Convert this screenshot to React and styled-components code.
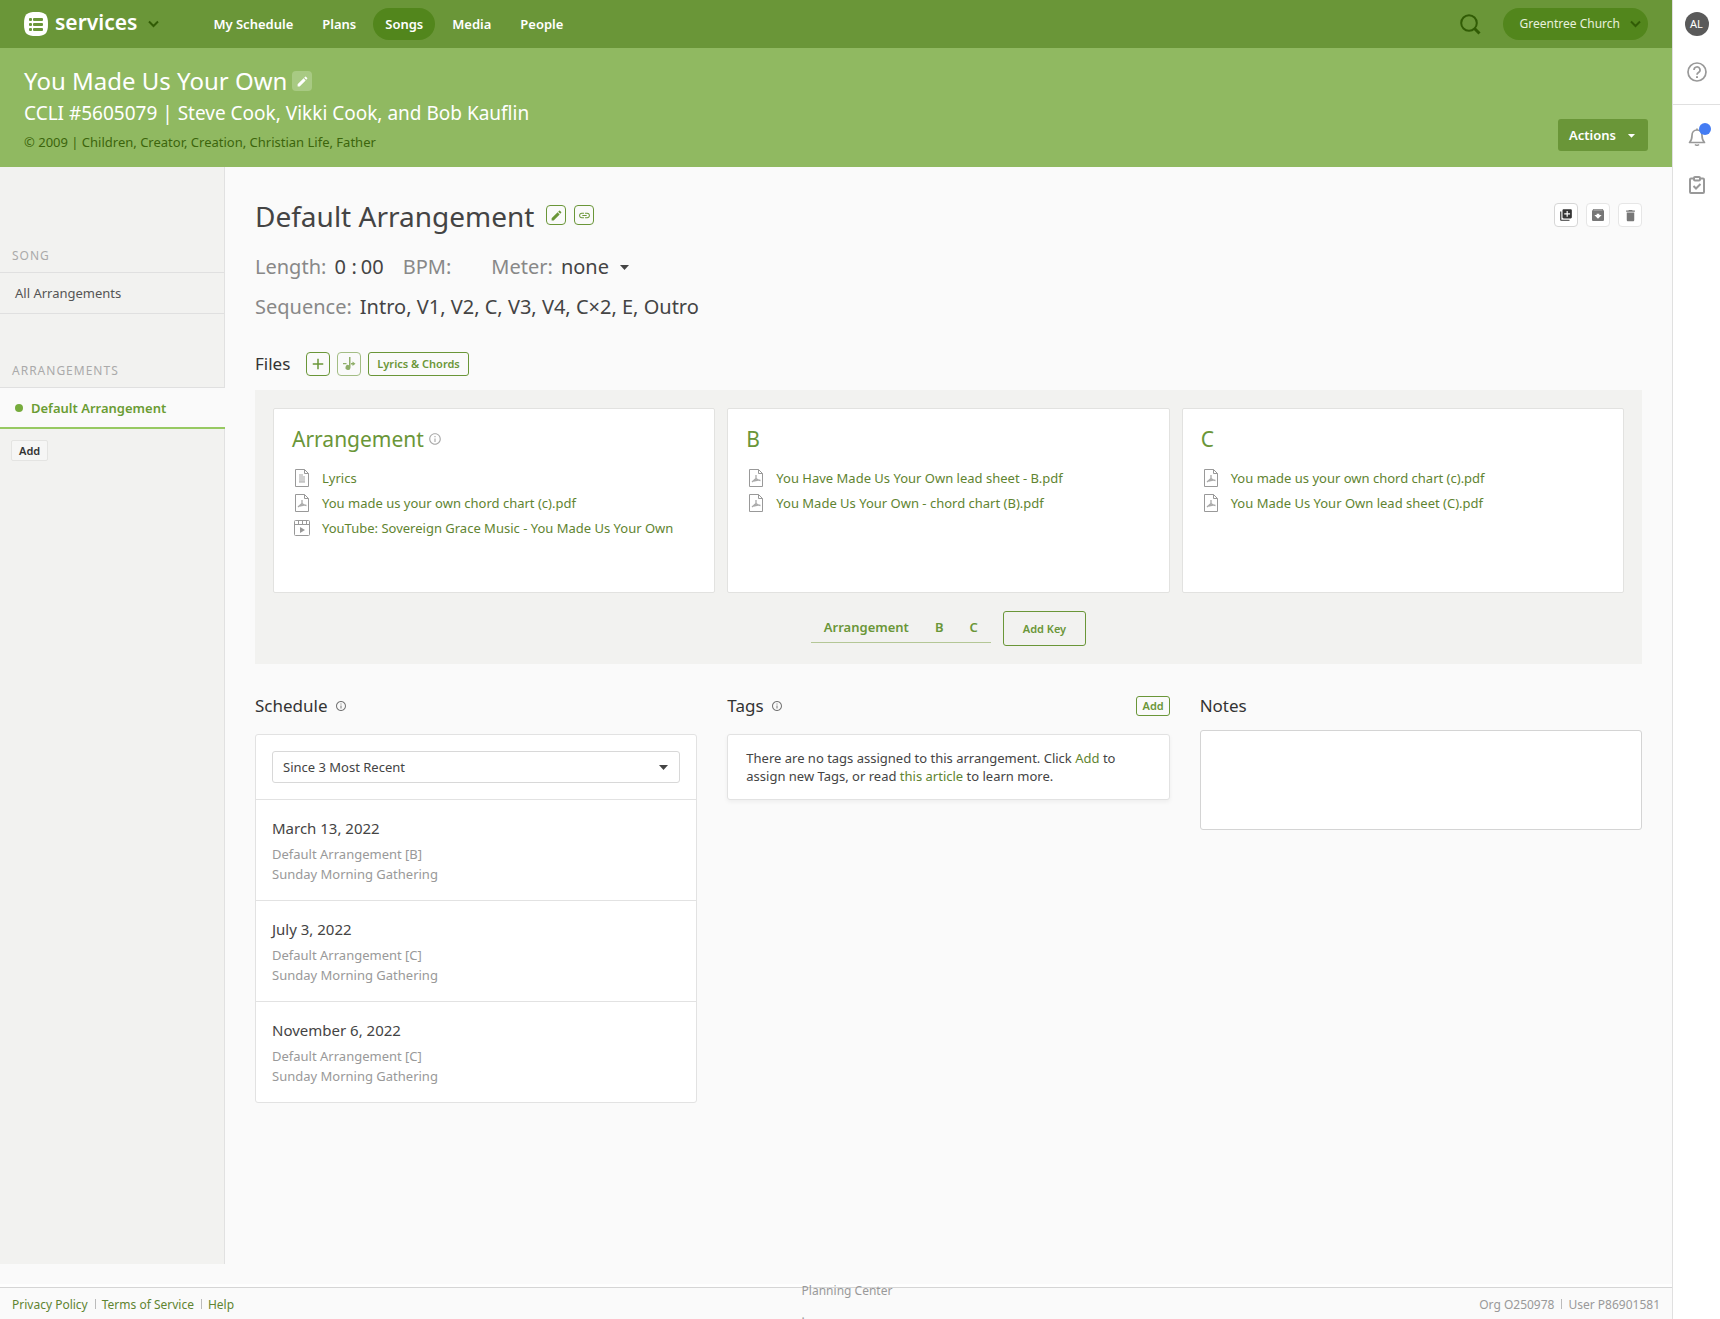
import React, { useState } from 'react';
import styled, { createGlobalStyle } from 'styled-components';
import {
  MdAdd,
  MdArchive,
  MdArrowDropDown,
  MdDelete,
  MdEdit,
  MdLibraryAdd,
  MdLink,
  MdOutlineInfo,
} from 'react-icons/md';

const GlobalStyle = createGlobalStyle`
  *, *::before, *::after {
    box-sizing: border-box;
  }

  body {
    margin: 0;
    background: #fafafa;
    color: #444;
    font-family: 'Noto Sans', sans-serif;
    font-size: 13px;
    line-height: 20px;
  }

  h1, h2, h3, p, ul {
    margin: 0;
    padding: 0;
    font-weight: 400;
  }

  ul {
    list-style: none;
  }

  button, input, select, textarea {
    font: inherit;
    color: inherit;
  }

  button {
    cursor: pointer;
  }

  a {
    color: #5f8431;
    text-decoration: none;
  }

  svg {
    display: block;
    flex: none;
  }
`;

const Shell = styled.div`
  display: flex;
  min-height: 100vh;
  overflow: hidden;
`;

const Page = styled.div`
  flex: 1;
  min-width: 0;
  display: flex;
  flex-direction: column;
`;

/* Top bar */
const TopBar = styled.header`
  display: flex;
  align-items: center;
  height: 48px;
  padding: 0 24px;
  background: #6a9638;
  color: #fff;
`;

const Brand = styled.button`
  display: flex;
  align-items: center;
  gap: 7px;
  padding: 0;
  border: 0;
  background: none;
  margin-right: 42px;
`;

const BrandName = styled.span`
  font-size: 21px;
  font-weight: 600;
  line-height: 24px;
  padding-bottom: 4px;
  margin-right: 4px;
`;

const Nav = styled.nav`
  display: flex;
  gap: 5px;
  flex: 1;
`;

const NavLink = styled.a`
  padding: 6px 12px;
  border-radius: 16px;
  background: ${(p) => (p.$active ? '#52861c' : 'transparent')};
  color: #fff;
  font-weight: 600;
`;

const SearchButton = styled.button`
  padding: 0;
  border: 0;
  background: none;
  margin-right: 22px;
`;

const OrgButton = styled.button`
  display: flex;
  align-items: center;
  gap: 10px;
  height: 32px;
  padding: 0 7px 0 17px;
  border: 0;
  border-radius: 16px;
  background: #52861c;
  color: #e8f1dc;
  font-size: 12px;
`;

/* Song header */
const SongHeader = styled.section`
  display: flex;
  justify-content: space-between;
  align-items: flex-end;
  padding: 17px 24px 12px;
  background: #90b961;
  color: #fff;
`;

const SongTitle = styled.h1`
  display: flex;
  align-items: center;
  gap: 5px;
  font-size: 24px;
  line-height: 32px;
`;

const SongAuthors = styled.p`
  font-size: 19px;
  line-height: 32px;
`;

const SongMeta = styled.p`
  line-height: 26px;
  color: #3c650c;
`;

const ActionsButton = styled.button`
  display: flex;
  align-items: center;
  gap: 7px;
  height: 32px;
  margin-bottom: 4px;
  padding: 0 8px 0 11px;
  border: 0;
  border-radius: 3px;
  background: #6a9638;
  color: #fff;
  font-weight: 600;
`;

const SquareButton = styled.button`
  display: flex;
  align-items: center;
  justify-content: center;
  width: ${(p) => p.$size || 20}px;
  height: ${(p) => p.$size || 20}px;
  padding: 0;
  border: 1px solid ${(p) => p.$border || '#6a9638'};
  border-radius: 4px;
  background: ${(p) => p.$bg || 'transparent'};
  color: ${(p) => p.$color || '#6a9638'};
`;

/* Body */
const Body = styled.div`
  display: flex;
  flex: 1;
  margin-bottom: 23px;
`;

const Sidebar = styled.aside`
  width: 225px;
  flex: none;
  padding-top: 32px;
  border-right: 1px solid #e1e1e1;
  background: #f2f2f0;
`;

const SidebarLabel = styled.h2`
  margin-top: 40px;
  padding: 0 12px;
  font-size: 12px;
  line-height: 33px;
  letter-spacing: 1px;
  color: #aaa;
`;

const SidebarLink = styled.a`
  display: flex;
  align-items: center;
  height: 42px;
  padding: 0 15px;
  border-top: 1px solid #e0e0e0;
  border-bottom: 1px solid #e0e0e0;
  color: #555;
`;

const ActiveLink = styled(SidebarLink)`
  gap: 8px;
  margin-right: -1px;
  border-bottom: 2px solid #97c962;
  background: #fafafa;
  color: #6a9c33;
  font-weight: 600;

  &::before {
    content: '';
    width: 8px;
    height: 8px;
    border-radius: 50%;
    background: #76ab3c;
  }
`;

const SidebarAdd = styled.button`
  height: 21px;
  margin: 11px;
  padding: 0 7px;
  border: 1px solid #e4e4e2;
  border-radius: 2px;
  background: #f6f6f5;
  color: #333;
  font-size: 11px;
  line-height: 18px;
  font-weight: 600;
`;

const Main = styled.main`
  flex: 1;
  min-width: 0;
  padding: 29px 30px 0;
`;

const TitleRow = styled.div`
  display: flex;
  align-items: center;
  gap: 8px;
  height: 38px;
  margin-bottom: 13px;
`;

const PageTitle = styled.h2`
  margin-right: 4px;
  padding-top: 2px;
  font-size: 28px;
  line-height: 40px;
`;

const Tools = styled.div`
  display: flex;
  gap: 8px;
  margin-left: auto;
`;

const DetailRow = styled.div`
  display: flex;
  align-items: center;
  gap: 8px;
  height: 40px;
  font-size: 20px;
  line-height: 28px;
`;

const DetailLabel = styled.label`
  color: #888;
`;

const DetailInput = styled.input`
  width: ${(p) => p.$width}px;
  padding: 0;
  border: 0;
  background: transparent;
`;

const Time = styled.span`
  display: flex;
  gap: 4px;
  margin-right: 8px;
`;

const SelectWrap = styled.span`
  display: flex;
  align-items: center;
  gap: 10px;

  select {
    appearance: none;
    flex: 1;
    padding: 0;
    border: 0;
    outline: 0;
    background: transparent;
  }
`;

const SelectBox = styled(SelectWrap)`
  height: 32px;
  margin: 16px;
  padding: 0 11px 0 10px;
  border: 1px solid #d8d8d8;
  border-radius: 3px;
`;

const FilesRow = styled.div`
  display: flex;
  align-items: center;
  gap: 7px;
  margin: 25px 0 14px;

  h3 {
    margin-right: 9px;
  }
`;

const SectionTitle = styled.h3`
  font-size: 17px;
  line-height: 24px;
  color: #333;
`;

const OutlineButton = styled.button`
  height: ${(p) => p.$height}px;
  padding: 0 ${(p) => p.$pad}px;
  border: 1px solid #6a9638;
  border-radius: 3px;
  background: transparent;
  color: #6a9638;
  font-size: 11px;
  line-height: 16px;
  font-weight: 600;
`;

const FilesPanel = styled.section`
  padding: 18px;
  background: #f2f2f0;
`;

const Columns = styled.div`
  display: grid;
  grid-template-columns: repeat(3, minmax(0, 1fr));
  gap: ${(p) => p.$gap}px;
  align-items: start;
`;

const FileCard = styled.article`
  min-height: 185px;
  padding: 15px 18px;
  border: 1px solid #e2e2e0;
  border-radius: 2px;
  background: #fff;
`;

const CardTitle = styled.h3`
  display: flex;
  align-items: center;
  gap: 4px;
  margin-bottom: 11px;
  font-size: 21px;
  line-height: 30px;
  color: #6a9638;

  svg {
    color: #aaa;
  }
`;

const FileItem = styled.li`
  display: flex;
  align-items: center;
  gap: 11px;
  height: 25px;
  padding-left: 1px;
  white-space: nowrap;
`;

const KeyRow = styled.div`
  display: flex;
  justify-content: center;
  gap: 12px;
  margin-top: 18px;
`;

const KeyTabs = styled.div`
  display: flex;
  height: 32px;
  border-bottom: 1px solid #b4c796;

  button {
    padding: 0 13px;
    border: 0;
    background: none;
    color: #6a9638;
    font-weight: 600;
  }
`;

const ColumnHead = styled.div`
  display: flex;
  align-items: center;
  gap: 7px;
  height: 30px;
  margin-bottom: ${(p) => (p.$tight ? 9 : 13)}px;

  svg {
    color: #777;
  }

  button {
    margin-left: auto;
  }
`;

const Details = styled(Columns)`
  margin-top: 27px;
`;

const Panel = styled.div`
  border: 1px solid #e2e2e2;
  border-radius: 3px;
  background: #fff;
  box-shadow: ${(p) => (p.$raised ? '0 2px 4px rgba(0, 0, 0, 0.05)' : 'none')};
`;

const TagsText = styled.p`
  padding: 14px 18px;
  line-height: 18px;
`;

const ScheduleItem = styled.li`
  padding: 16px;
  border-top: 1px solid #e2e2e2;
  color: #999;
`;

const ScheduleDate = styled.h4`
  margin: 0 0 4px;
  font-size: 15px;
  line-height: 24px;
  font-weight: 400;
  color: #444;
`;

const NotesBox = styled.textarea`
  display: block;
  width: 100%;
  height: 100px;
  border: 1px solid #d4d4d4;
  border-radius: 3px;
  background: #fff;
  resize: none;
`;

/* Footer */
const Footer = styled.footer`
  display: grid;
  grid-template-columns: 1fr auto 1fr;
  grid-template-rows: 100%;
  align-items: center;
  height: 32px;
  padding: 2px 12px 0;
  border-top: 1px solid #d5d5d5;
  box-shadow: 0 -3px 0 #fefefe;
  font-size: 12px;
  color: #999;
`;

const FooterGroup = styled.div`
  display: flex;
  align-items: center;
  justify-content: ${(p) => (p.$end ? 'flex-end' : 'flex-start')};

  > * + * {
    margin-left: 7px;
    padding-left: 7px;
    background: linear-gradient(#bbb, #bbb) 0 4px / 1px 10px no-repeat;
  }
`;

const Credit = styled.p`
  padding-left: 22px;
  line-height: 28px;
`;

/* Right rail */
const Rail = styled.aside`
  width: 48px;
  flex: none;
  border-left: 1px solid #e0e0e0;
  background: #fff;
  color: #999;
`;

const RailGroup = styled.div`
  display: flex;
  flex-direction: column;
  align-items: center;
  gap: 24px;
  padding: ${(p) => p.$top}px 0 20px;

  & + & {
    border-top: 1px solid #e0e0e0;
  }
`;

const RailButton = styled.button`
  position: relative;
  display: flex;
  align-items: center;
  justify-content: center;
  width: 24px;
  height: 24px;
  padding: 0;
  border: 0;
  border-radius: 50%;
  background: ${(p) => (p.$avatar ? '#5a5a5a' : 'none')};
  color: ${(p) => (p.$avatar ? '#fff' : 'inherit')};
  font-size: 11px;
`;

const Dot = styled.span`
  position: absolute;
  top: -2px;
  right: -2px;
  width: 12px;
  height: 12px;
  border-radius: 50%;
  background: #447cf3;
`;

const BrandIcon = () => (
  <svg width="24" height="24" viewBox="0 0 24 24">
    <path fill="#fff" d="M12 0c9 0 12 2 12 12s-3 12-12 12S0 22 0 12 3 0 12 0z" />
    <g fill="#6a9638">
      <rect x="5" y="6" width="3" height="3" rx="1" />
      <rect x="5" y="11" width="3" height="3" rx="1" />
      <rect x="5" y="16" width="3" height="3" rx="1" />
      <rect x="9" y="6" width="10" height="3" rx="1" />
      <rect x="9" y="11" width="10" height="3" rx="1" />
      <rect x="9" y="16" width="10" height="3" rx="1" />
    </g>
  </svg>
);

const Chevron = () => (
  <svg width="11" height="8" viewBox="0 0 11 8" fill="none" stroke="#315c05" strokeWidth="2">
    <path d="M1 1.5l4.500 4.500L10 1.500" />
  </svg>
);

const Caret = () => (
  <svg width="9" height="5" viewBox="0 0 9 5" fill="currentColor">
    <path d="M0 0h9L4.500 5z" />
  </svg>
);

const SearchIcon = () => (
  <svg width="21" height="21" viewBox="0 0 21 21" fill="none" stroke="#315c05">
    <circle cx="9" cy="9" r="7.800" strokeWidth="2" />
    <path d="M14.500 14.500l5 5" strokeWidth="3" />
  </svg>
);

const NoteIcon = () => (
  <svg width="14" height="16" viewBox="0 0 14 16" fill="#8fae69">
    <path d="M7 1h1.500v10.500A2.500 2.500 0 1 1 7 9.200zM1 7h3.500v1.300H1zM9 7h1.500V5.500L13.500 7.700l-3 2.200V8.400H9z" />
  </svg>
);

const FileIcon = ({ type }) => {
  if (type === 'video') {
    return (
      <svg width="18" height="16" viewBox="0 0 18 16" fill="none" stroke="#999">
        <rect x="1.500" y=".5" width="15" height="15" rx="1" />
        <path d="M1.500 4.500h15M5.500.5v4M9.500.5v4M13.500.5v4" />
        <path d="M7 7l5 3-5 3z" fill="#999" stroke="none" />
      </svg>
    );
  }
  return (
    <svg width="18" height="18" viewBox="0 0 18 18" fill="none" stroke="#999">
      <path d="M2.500.5h9l4 4v13h-13z" />
      <path d="M11.500.5v4h4" />
      {type === 'text' ? (
        <path d="M6 6h4M6 8h6M6 10h6M6 12h6M6 13h6" stroke="#c4c4c4" strokeWidth="1.500" />
      ) : (
        <path d="M9 6v3.500L5 13M9 9.500c1 1.200 2 1.800 4.500 2M6.500 12l4.500-1" stroke="#aaa" strokeWidth="1.300" />
      )}
    </svg>
  );
};

const HelpIcon = () => (
  <svg width="20" height="20" viewBox="0 0 20 20" fill="none" stroke="currentColor" strokeWidth="1.700">
    <circle cx="10" cy="10" r="9" />
    <path d="M7 8a3 3 0 1 1 4.500 2.500C10.400 11.200 10 11.500 10 12.800" />
    <path d="M10 14.200v1.900" strokeWidth="2" />
  </svg>
);

const BellIcon = () => (
  <svg width="18" height="18" viewBox="0 0 18 18" fill="none" stroke="currentColor" strokeWidth="1.700">
    <path d="M1.500 14.500h15c-2-2-2.500-3-2.500-7 0-3-2-5.500-5-5.500S4 4.500 4 7.500c0 4-.5 5-2.500 7z" strokeLinejoin="round" />
    <path d="M7 16.500c1 1 3 1 4 0M9 .5V2" />
  </svg>
);

const ClipboardIcon = () => (
  <svg width="16" height="18" viewBox="0 0 16 18" fill="none" stroke="currentColor" strokeWidth="2">
    <rect x="1" y="2.500" width="14" height="14.500" rx="1" />
    <rect x="5" y="1" width="6" height="3.500" rx="1" fill="#fff" />
    <path d="M4.500 10l2.500 2.500L11.500 8" />
  </svg>
);

const navItems = ['My Schedule', 'Plans', 'Songs', 'Media', 'People'];

const fileGroups = [
  {
    title: 'Arrangement',
    info: true,
    files: [
      { type: 'text', name: 'Lyrics' },
      { type: 'pdf', name: 'You made us your own chord chart (c).pdf' },
      { type: 'video', name: 'YouTube: Sovereign Grace Music - You Made Us Your Own' },
    ],
  },
  {
    title: 'B',
    files: [
      { type: 'pdf', name: 'You Have Made Us Your Own lead sheet - B.pdf' },
      { type: 'pdf', name: 'You Made Us Your Own - chord chart (B).pdf' },
    ],
  },
  {
    title: 'C',
    files: [
      { type: 'pdf', name: 'You made us your own chord chart (c).pdf' },
      { type: 'pdf', name: 'You Made Us Your Own lead sheet (C).pdf' },
    ],
  },
];

const schedule = [
  { date: 'March 13, 2022', arrangement: 'Default Arrangement [B]' },
  { date: 'July 3, 2022', arrangement: 'Default Arrangement [C]' },
  { date: 'November 6, 2022', arrangement: 'Default Arrangement [C]' },
];

function App() {
  const [notes, setNotes] = useState('');

  return (
    <Shell>
      <GlobalStyle />
      <Page>
        <TopBar>
          <Brand>
            <BrandIcon />
            <BrandName>services</BrandName>
            <Chevron />
          </Brand>
          <Nav>
            {navItems.map((item) => (
              <NavLink key={item} href="#" $active={item === 'Songs'}>
                {item}
              </NavLink>
            ))}
          </Nav>
          <SearchButton aria-label="Search">
            <SearchIcon />
          </SearchButton>
          <OrgButton>
            Greentree Church
            <Chevron />
          </OrgButton>
        </TopBar>

        <SongHeader>
          <div>
            <SongTitle>
              You Made Us Your Own
              <SquareButton aria-label="Edit song" $border="transparent" $bg="#a8ca83" $color="#fff">
                <MdEdit size={13} />
              </SquareButton>
            </SongTitle>
            <SongAuthors>CCLI #5605079 | Steve Cook, Vikki Cook, and Bob Kauflin</SongAuthors>
            <SongMeta>© 2009 | Children, Creator, Creation, Christian Life, Father</SongMeta>
          </div>
          <ActionsButton>
            Actions
            <MdArrowDropDown size={17} />
          </ActionsButton>
        </SongHeader>

        <Body>
          <Sidebar>
            <SidebarLabel>SONG</SidebarLabel>
            <SidebarLink href="#">All Arrangements</SidebarLink>
            <SidebarLabel>ARRANGEMENTS</SidebarLabel>
            <ActiveLink href="#">Default Arrangement</ActiveLink>
            <SidebarAdd>Add</SidebarAdd>
          </Sidebar>

          <Main>
            <TitleRow>
              <PageTitle>Default Arrangement</PageTitle>
              <SquareButton aria-label="Edit arrangement">
                <MdEdit size={13} />
              </SquareButton>
              <SquareButton aria-label="Copy link">
                <MdLink size={13} />
              </SquareButton>
              <Tools>
                <SquareButton aria-label="Duplicate" $size={24} $border="#d6d6d6" $bg="#fff" $color="#333">
                  <MdLibraryAdd size={14} />
                </SquareButton>
                <SquareButton aria-label="Archive" $size={24} $border="#e6e6e6" $bg="#fff" $color="#777">
                  <MdArchive size={16} />
                </SquareButton>
                <SquareButton aria-label="Delete" $size={24} $border="#e6e6e6" $bg="#fff" $color="#777">
                  <MdDelete size={15} />
                </SquareButton>
              </Tools>
            </TitleRow>

            <DetailRow>
              <DetailLabel htmlFor="minutes">Length:</DetailLabel>
              <Time>
                <DetailInput id="minutes" $width={13} defaultValue="0" />
                <span>:</span>
                <DetailInput aria-label="Seconds" $width={26} defaultValue="00" />
              </Time>
              <DetailLabel htmlFor="bpm">BPM:</DetailLabel>
              <DetailInput id="bpm" $width={24} />
              <DetailLabel htmlFor="meter">Meter:</DetailLabel>
              <SelectWrap>
                <select id="meter">
                  <option>none</option>
                </select>
                <Caret />
              </SelectWrap>
            </DetailRow>
            <DetailRow>
              <DetailLabel as="span">Sequence:</DetailLabel>
              <span>Intro, V1, V2, C, V3, V4, C×2, E, Outro</span>
            </DetailRow>

            <FilesRow>
              <SectionTitle>Files</SectionTitle>
              <SquareButton aria-label="Add file" $size={24}>
                <MdAdd size={18} />
              </SquareButton>
              <SquareButton aria-label="Transpose" $size={24} $border="#a3bd84">
                <NoteIcon />
              </SquareButton>
              <OutlineButton $height={24} $pad={8}>Lyrics &amp; Chords</OutlineButton>
            </FilesRow>

            <FilesPanel>
              <Columns $gap={12}>
                {fileGroups.map((group) => (
                  <FileCard key={group.title}>
                    <CardTitle>
                      {group.title}
                      {group.info && <MdOutlineInfo size={14} />}
                    </CardTitle>
                    <ul>
                      {group.files.map((file) => (
                        <FileItem key={file.name}>
                          <FileIcon type={file.type} />
                          <a href="#">{file.name}</a>
                        </FileItem>
                      ))}
                    </ul>
                  </FileCard>
                ))}
              </Columns>
              <KeyRow>
                <KeyTabs>
                  {fileGroups.map((group) => (
                    <button key={group.title}>{group.title}</button>
                  ))}
                </KeyTabs>
                <OutlineButton $height={35} $pad={19}>Add Key</OutlineButton>
              </KeyRow>
            </FilesPanel>

            <Details $gap={30}>
              <section>
                <ColumnHead>
                  <SectionTitle>Schedule</SectionTitle>
                  <MdOutlineInfo size={12} />
                </ColumnHead>
                <Panel>
                  <SelectBox>
                    <select aria-label="Schedule range">
                      <option>Since 3 Most Recent</option>
                    </select>
                    <Caret />
                  </SelectBox>
                  <ul>
                    {schedule.map((item) => (
                      <ScheduleItem key={item.date}>
                        <ScheduleDate>{item.date}</ScheduleDate>
                        <p>{item.arrangement}</p>
                        <p>Sunday Morning Gathering</p>
                      </ScheduleItem>
                    ))}
                  </ul>
                </Panel>
              </section>

              <section>
                <ColumnHead>
                  <SectionTitle>Tags</SectionTitle>
                  <MdOutlineInfo size={12} />
                  <OutlineButton $height={20} $pad={5}>Add</OutlineButton>
                </ColumnHead>
                <Panel $raised>
                  <TagsText>
                    There are no tags assigned to this arrangement. Click <a href="#">Add</a> to assign new
                    Tags, or read <a href="#">this article</a> to learn more.
                  </TagsText>
                </Panel>
              </section>

              <section>
                <ColumnHead $tight>
                  <SectionTitle as="label" htmlFor="notes">Notes</SectionTitle>
                </ColumnHead>
                <NotesBox id="notes" value={notes} onChange={(e) => setNotes(e.target.value)} />
              </section>
            </Details>
          </Main>
        </Body>

        <Footer>
          <FooterGroup>
            <a href="#">Privacy Policy</a>
            <a href="#">Terms of Service</a>
            <a href="#">Help</a>
          </FooterGroup>
          <Credit>
            Planning Center
            <br />·
          </Credit>
          <FooterGroup $end>
            <span>Org O250978</span>
            <span>User P86901581</span>
          </FooterGroup>
        </Footer>
      </Page>

      <Rail>
        <RailGroup $top={12}>
          <RailButton $avatar>AL</RailButton>
          <RailButton aria-label="Help">
            <HelpIcon />
          </RailButton>
        </RailGroup>
        <RailGroup $top={20}>
          <RailButton aria-label="Notifications">
            <BellIcon />
            <Dot />
          </RailButton>
          <RailButton aria-label="Tasks">
            <ClipboardIcon />
          </RailButton>
        </RailGroup>
      </Rail>
    </Shell>
  );
}

export default App;
